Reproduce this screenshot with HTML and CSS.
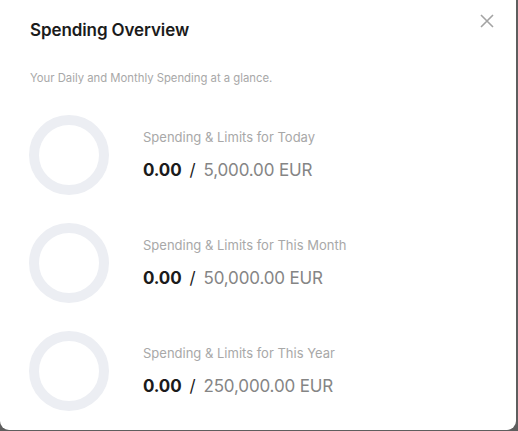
FILE: index.html
```html
<!DOCTYPE html>
<html lang="en">
<head>
  <meta charset="UTF-8" />
  <title>Spending Overview</title>
  <link rel="stylesheet" href="styles.css">
</head>
<body>
<div class="modal">
  <div class="modal-head">
    <h2 class="title">Spending Overview</h2>
    <button class="close" aria-label="Close">
      <svg width="14" height="14" viewBox="0 0 14 14"><path d="M1 1L13 13M13 1L1 13" stroke="#a3a3a3" stroke-width="1.6" fill="none"/></svg>
    </button>
  </div>

  <p class="subtitle">Your Daily and Monthly Spending at a glance.</p>

  <div class="limits">
    <div class="limit">
      <div class="ring"></div>
      <div class="limit-info">
        <p class="limit-label">Spending &amp; Limits for Today</p>
        <p class="limit-amount"><b>0.00</b><span class="sep">/</span><span class="max">5,000.00 EUR</span></p>
      </div>
    </div>
    <div class="limit">
      <div class="ring"></div>
      <div class="limit-info">
        <p class="limit-label">Spending &amp; Limits for This Month</p>
        <p class="limit-amount"><b>0.00</b><span class="sep">/</span><span class="max">50,000.00 EUR</span></p>
      </div>
    </div>
    <div class="limit">
      <div class="ring"></div>
      <div class="limit-info">
        <p class="limit-label">Spending &amp; Limits for This Year</p>
        <p class="limit-amount"><b>0.00</b><span class="sep">/</span><span class="max">250,000.00 EUR</span></p>
      </div>
    </div>
  </div>
</div>
</body>
</html>
```

FILE: styles.css
```css
:root { --text:#1b1b1b; --muted:#a8a8a8; --ring:#eceef3; }
*{box-sizing:border-box;margin:0;padding:0;font-family:Inter,"Noto Sans",Arial,sans-serif}
html,body{height:100%}
body{background:#5e5e5e;overflow:hidden}

.modal {
  width: 516px;
  height: 430px;
  background: #fff;
  border-radius: 0 0 9px 9px;
  padding: 0 30px;
}

.modal-head{display:flex;justify-content:space-between;align-items:flex-start;padding-top:20px}
.title{font-size:17px;font-weight:600;color:var(--text);letter-spacing:-.1px;line-height:20px}
.close{background:none;border:0;cursor:pointer;margin-top:-6px;margin-right:-8px;display:flex}

.subtitle{font-size:11.3px;color:var(--muted);margin-top:31px;line-height:14px}

.limits{display:flex;flex-direction:column;gap:28px;margin-top:30px}
.limit{display:flex;align-items:flex-start;gap:34px;height:80px}
.ring{width:80px;height:80px;border-radius:50%;border:10px solid var(--ring);flex:none;margin-left:-1px}
.limit-info{padding-top:14px}
.limit-label{font-size:13px;color:var(--muted);line-height:16px}
.limit-amount{font-size:17px;color:#858585;margin-top:15px;line-height:20px;letter-spacing:-.15px}
.limit-amount b{color:var(--text);font-weight:700}
.sep{color:var(--text);margin:0 8px}
```
